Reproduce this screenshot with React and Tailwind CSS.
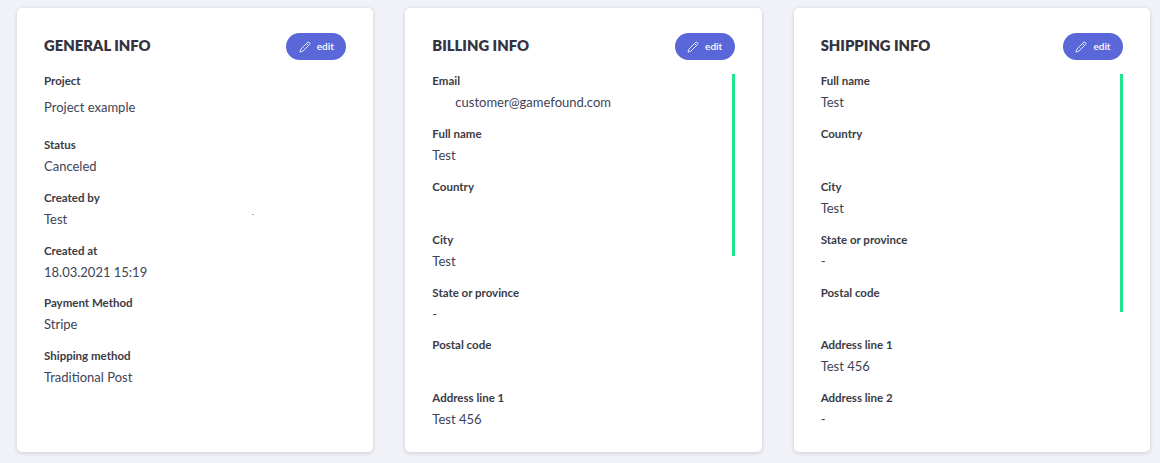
import React from 'react';

const general = [
  { label: 'Project', value: 'Project example', first: true },
  { label: 'Status', value: 'Canceled' },
  { label: 'Created by', value: 'Test' },
  { label: 'Created at', value: '18.03.2021 15:19' },
  { label: 'Payment Method', value: 'Stripe' },
  { label: 'Shipping method', value: 'Traditional Post' },
];

const billing = [
  { label: 'Email', value: 'customer@gamefound.com', indent: true },
  { label: 'Full name', value: 'Test' },
  { label: 'Country', value: '' },
  { label: 'City', value: 'Test' },
  { label: 'State or province', value: '-' },
  { label: 'Postal code', value: '' },
  { label: 'Address line 1', value: 'Test 456' },
];

const shipping = [
  { label: 'Full name', value: 'Test' },
  { label: 'Country', value: '' },
  { label: 'City', value: 'Test' },
  { label: 'State or province', value: '-' },
  { label: 'Postal code', value: '' },
  { label: 'Address line 1', value: 'Test 456' },
  { label: 'Address line 2', value: '-' },
];

function EditButton() {
  return (
    <button className="flex items-center justify-center gap-[6px] w-[60px] h-[27px] rounded-full bg-[#5a67d8] text-white text-[10px] font-semibold">
      <svg width="12" height="12" viewBox="0 0 24 24" fill="none" stroke="#e6e8fb" strokeWidth="2" strokeLinecap="round" strokeLinejoin="round">
        <path d="M17 3a2.83 2.83 0 0 1 4 4L7.5 20.5 2 22l1.5-5.5L17 3z" />
        <path d="M15 5l4 4" />
      </svg>
      edit
    </button>
  );
}

function Row({ label, value, first, indent }) {
  return (
    <div className={first ? 'h-[63.6px]' : 'h-[52.8px]'}>
      <div className="h-[16px] text-[11.5px] leading-[16px] font-bold text-[#3a3b45]">{label}</div>
      <div className={`text-[13px] text-[#3e4356] leading-[20px] ${first ? 'mt-[8px]' : 'mt-[3px]'} ${indent ? 'pl-[23px]' : ''}`}>
        {value}
      </div>
    </div>
  );
}

function Card({ title, rows, bar, children }) {
  return (
    <div className="relative w-[356.33px] h-[444px] bg-white rounded-[5px] shadow-[0_1px_4px_rgba(0,0,0,0.16)] px-[27px] pt-[25px] overflow-hidden">
      <div className="flex items-center justify-between h-[27px] mb-[13.4px]">
        <h2 className="pb-[2px] text-[14.8px] font-extrabold text-[#33343f]">{title}</h2>
        <EditButton />
      </div>
      {rows.map((r) => (
        <Row key={r.label} {...r} />
      ))}
      {bar}
      {children}
    </div>
  );
}

export default function App() {
  return (
    <div className="w-[1160px] h-[463px] overflow-hidden bg-[#f1f2f8] pl-[17px] pt-[8px] flex gap-[32px] font-['Lato',sans-serif]">
      <Card title="GENERAL INFO" rows={general}>
        <div className="absolute left-[235px] top-[206px] w-[2px] h-[1px] bg-[#9fb4c8]" />
      </Card>
      <Card
        title="BILLING INFO"
        rows={billing}
        bar={<div className="absolute left-[327px] top-[66px] w-[3px] h-[182px] bg-[#1fe58c]" />}
      />
      <Card
        title="SHIPPING INFO"
        rows={shipping}
        bar={<div className="absolute left-[326px] top-[66px] w-[3px] h-[238px] bg-[#1fe58c]" />}
      />
    </div>
  );
}
